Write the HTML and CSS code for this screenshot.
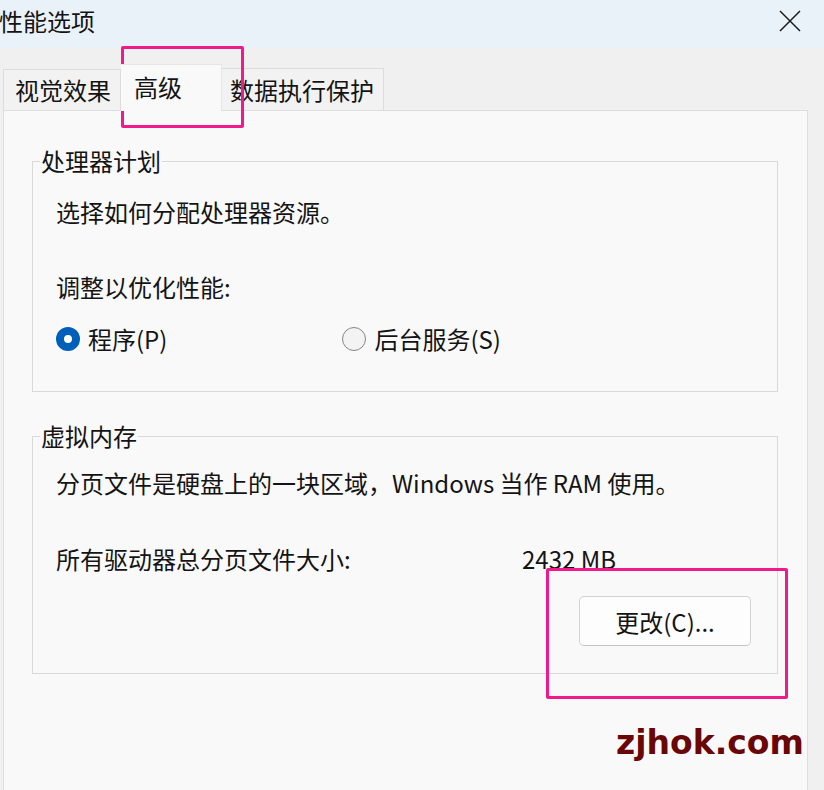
FILE: index.html
```html
<!DOCTYPE html>
<html lang="zh-CN">
<head>
<meta charset="utf-8">
<title>性能选项</title>
<link rel="stylesheet" href="styles.css">
</head>
<body>
<div class="window">
  <header class="titlebar">
    <span class="title">性能选项</span>
    <svg class="close" width="22" height="22" viewBox="0 0 22 22" aria-hidden="true">
      <path d="M1 1 L21 21 M21 1 L1 21" stroke="#1b1b1b" stroke-width="1.5" fill="none"/>
    </svg>
  </header>
  <div class="tabarea">
    <div class="tabs">
      <div class="tab tab-visual">视觉效果</div>
      <div class="tab tab-active">高级</div>
      <div class="tab tab-dep">数据执行保护</div>
    </div>
    <div class="panel">
      <fieldset class="group group-cpu">
        <legend>处理器计划</legend>
        <p class="line l1">选择如何分配处理器资源。</p>
        <p class="line l2">调整以优化性能:</p>
        <div class="radios">
          <label class="radio"><span class="dot on"></span>程序(P)</label>
          <label class="radio r2"><span class="dot"></span>后台服务(S)</label>
        </div>
      </fieldset>
      <fieldset class="group group-mem">
        <legend>虚拟内存</legend>
        <p class="line m1">分页文件是硬盘上的一块区域，Windows 当作 RAM 使用。</p>
        <div class="line sizerow"><span class="lbl">所有驱动器总分页文件大小:</span><span>2432 MB</span></div>
        <div class="btnrow"><button class="btn">更改(C)...</button></div>
      </fieldset>
    </div>
  </div>
  <div class="mark mark-tab"></div>
  <div class="mark mark-btn"></div>
  <div class="watermark">zjhok.com</div>
</div>
</body>
</html>
```

FILE: styles.css
```css
html, body {
  margin: 0;
  padding: 0;
  width: 824px;
  height: 790px;
  overflow: hidden;
  background: #f0f0f0;
}
body {
  font-family: "Noto Sans CJK SC", "Microsoft YaHei", sans-serif;
  font-size: 24px;
  color: #141414;
}
.window {
  position: relative;
  width: 824px;
  height: 790px;
}
.titlebar {
  height: 48px;
  background: #eaf2f9;
  display: flex;
  align-items: center;
  justify-content: space-between;
  padding-right: 23px;
  box-sizing: border-box;
}
.title {
  line-height: 30px;
  margin-top: -7px;
  margin-left: -1px;
}
.close {
  margin-top: -6px;
}
.tabarea {
  background: #f0f0f0;
  padding-left: 3px;
  width: 808px;
  box-sizing: border-box;
}
.tabs {
  height: 62px;
  display: flex;
  align-items: flex-end;
}
.tab {
  box-sizing: border-box;
  height: 41px;
  line-height: 40px;
  border: 1px solid #dcdcdc;
  border-bottom: none;
  background: #f2f2f2;
  white-space: nowrap;
}
.tab-visual {
  width: 118px;
  padding-left: 11px;
}
.tab-active {
  width: 101px;
  height: 47px;
  line-height: 44px;
  padding-left: 13px;
  background: #f9f9f9;
  border-color: #e6e6e6;
  border-left: none;
  position: relative;
  z-index: 1;
  margin-bottom: -1px;
  align-self: flex-end;
}
.tab-dep {
  width: 162px;
  height: 42px;
  line-height: 42px;
  padding-left: 8px;
  border-left: none;
}
.panel {
  background: #f9f9f9;
  border: 1px solid #dedede;
  border-bottom: none;
  height: 690px;
  box-sizing: border-box;
  padding-left: 28px;
  padding-top: 38px;
}
.group {
  margin: 0;
  width: 746px;
  box-sizing: border-box;
  border: 1px solid #d9d9d9;
  padding: 0 26px 0 23px;
  min-width: 0;
}
.group legend {
  padding: 0 1px;
  margin-left: -16px;
  line-height: 24px;
  height: 24px;
}
.line {
  margin: 0;
  line-height: 30px;
  white-space: nowrap;
}
.group-cpu {
  padding-bottom: 37px;
}
.l1 { margin-top: 24px; }
.l2 { margin-top: 45px; }
.radios {
  margin-top: 22px;
  display: flex;
  align-items: center;
  height: 30px;
}
.radio {
  display: flex;
  align-items: center;
  gap: 8px;
  line-height: 30px;
}
.radio.r2 {
  margin-left: 175px;
}
.dot {
  width: 24px;
  height: 24px;
  box-sizing: border-box;
  border-radius: 50%;
  border: 1px solid #858585;
  background: #f3f3f3;
}
.dot.on {
  border: 8px solid #005fb8;
  background: #ffffff;
}
.group-mem {
  margin-top: 32px;
  padding-bottom: 27px;
}
.m1 { margin-top: 20px; }
.sizerow {
  margin-top: 46px;
  display: flex;
}
.lbl {
  width: 466px;
}
.btnrow {
  margin-top: 22px;
  display: flex;
  justify-content: flex-end;
}
.btn {
  width: 172px;
  height: 50px;
  font-family: inherit;
  font-size: 24px;
  color: #141414;
  background: #fdfdfd;
  border: 1px solid #d3d3d3;
  border-bottom-color: #c4c4c4;
  border-radius: 5px;
  padding: 0;
}
.mark {
  position: absolute;
  border: 3px solid #f01a8a;
  border-radius: 2px;
  box-sizing: border-box;
}
.mark-tab {
  left: 121px;
  top: 46px;
  width: 123px;
  height: 82px;
}
.mark-btn {
  left: 546px;
  top: 568px;
  width: 242px;
  height: 131px;
}
.watermark {
  position: absolute;
  left: 616px;
  top: 723px;
  font-family: "DejaVu Sans", sans-serif;
  font-weight: bold;
  font-size: 33px;
  line-height: 40px;
  color: #6a0606;
}
```
